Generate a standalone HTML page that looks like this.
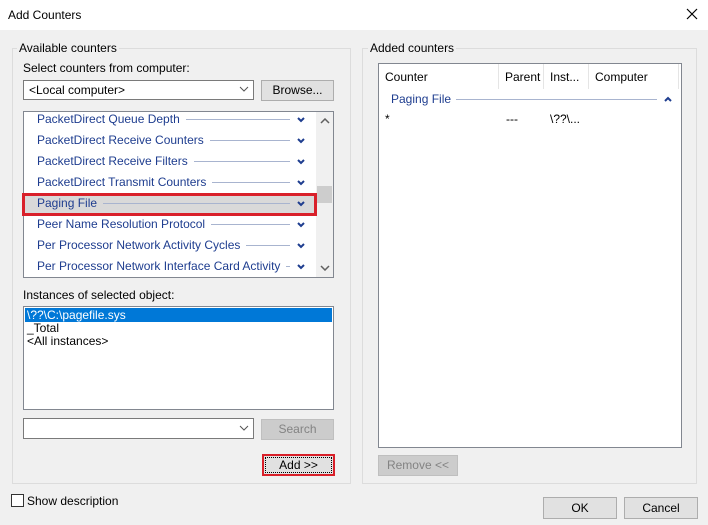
<!DOCTYPE html>
<html><head><style>
*{margin:0;padding:0;box-sizing:border-box}
body{width:708px;height:525px;background:#f0f0f0;font-family:"Liberation Sans",sans-serif;font-size:12px;color:#000;position:relative;overflow:hidden}
.a{position:absolute}
.t{position:absolute;white-space:nowrap;line-height:14px}
.grp{position:absolute;border:1px solid #dcdcdc}
.btn{position:absolute;background:#e1e1e1;border:1px solid #adadad;text-align:center;line-height:18px}
.box{position:absolute;background:#fff;border:1px solid #828790}
.row{position:absolute;left:37px;width:253px;height:21px;line-height:21px;color:#1e3d8f;white-space:nowrap;font-size:12px;display:flex;align-items:center}
.row i{flex:1;height:1px;background:#a8b4cf;margin-left:6px}
.line{position:absolute;height:1px;background:#a8b4cf}
</style></head><body>
<div class="a" style="left:0;top:0;width:708px;height:30px;background:#fff"></div>
<div class="t" style="left:8px;top:8px;font-size:12px">Add Counters</div>
<svg class="a" style="left:686px;top:8px" width="12" height="12"><path d="M1 1L11 11M11 1L1 11" stroke="#000" stroke-width="1.2"/></svg>

<div class="grp" style="left:12px;top:48px;width:339px;height:436px"></div>
<div class="t" style="left:17px;top:41px;background:#f0f0f0;padding:0 2px">Available counters</div>
<div class="t" style="left:23px;top:61px">Select counters from computer:</div>
<div class="box" style="left:23px;top:80px;width:231px;height:20px;border-color:#7a7a7a"></div>
<div class="t" style="left:29px;top:83px">&lt;Local computer&gt;</div>
<svg class="a" style="left:239px;top:86px" width="10" height="6"><path d="M1 1L5 5L9 1" stroke="#555" fill="none"/></svg>
<div class="btn" style="left:261px;top:80px;width:73px;height:21px">Browse...</div>

<div class="box" style="left:23px;top:111px;width:311px;height:167px;overflow:hidden">
 <div class="a" style="left:292px;top:0;width:17px;height:165px;background:#f0f0f0"></div>
 <div class="a" style="left:293px;top:74px;width:15px;height:17px;background:#cdcdcd"></div>
 <svg class="a" style="left:296px;top:6px" width="10" height="6"><path d="M1 5L5 1L9 5" stroke="#606060" stroke-width="1.5" fill="none"/></svg>
 <svg class="a" style="left:296px;top:153px" width="10" height="6"><path d="M1 1L5 5L9 1" stroke="#606060" stroke-width="1.5" fill="none"/></svg>
 <div class="a" style="left:0;top:82px;width:292px;height:21px;background:#d9d9d9"></div>
</div>
<div id="rows"></div>
<div class="a" style="left:22px;top:193px;width:295px;height:23px;border:3px solid #d9202a"></div>

<div class="t" style="left:23px;top:288px">Instances of selected object:</div>
<div class="box" style="left:23px;top:306px;width:311px;height:104px"></div>
<div class="a" style="left:25px;top:308px;width:307px;height:14px;background:#0078d7"></div>
<div class="t" style="left:27px;top:308px;color:#fff">\??\C:\pagefile.sys</div>
<div class="t" style="left:27px;top:321px">_Total</div>
<div class="t" style="left:27px;top:334px">&lt;All instances&gt;</div>

<div class="box" style="left:23px;top:418px;width:231px;height:21px;border-color:#7a7a7a"></div>
<svg class="a" style="left:239px;top:425px" width="10" height="6"><path d="M1 1L5 5L9 1" stroke="#555" fill="none"/></svg>
<div class="btn" style="left:261px;top:419px;width:73px;height:21px;background:#cccccc;border-color:#bfbfbf;color:#838383">Search</div>
<div class="btn" style="left:262px;top:454px;width:73px;height:22px;border:2px solid #d9202a;line-height:18px"><div style="border:1px dotted #000;margin:1px;line-height:14px">Add &gt;&gt;</div></div>

<div class="grp" style="left:362px;top:48px;width:335px;height:436px"></div>
<div class="t" style="left:368px;top:41px;background:#f0f0f0;padding:0 2px">Added counters</div>
<div class="box" style="left:378px;top:63px;width:304px;height:385px"></div>
<div class="t" style="left:385px;top:70px">Counter</div>
<div class="a" style="left:498px;top:64px;width:1px;height:25px;background:#e5e5e5"></div>
<div class="t" style="left:505px;top:70px">Parent</div>
<div class="a" style="left:543px;top:64px;width:1px;height:25px;background:#e5e5e5"></div>
<div class="t" style="left:550px;top:70px">Inst...</div>
<div class="a" style="left:588px;top:64px;width:1px;height:25px;background:#e5e5e5"></div>
<div class="t" style="left:595px;top:70px">Computer</div>
<div class="a" style="left:678px;top:64px;width:1px;height:25px;background:#e5e5e5"></div>
<div class="t" style="left:391px;top:92px;color:#1e3d8f">Paging File</div>
<div class="line" style="left:456px;top:99px;width:201px"></div>
<svg class="a" style="left:664px;top:96px" width="8" height="6"><path d="M1 5L4 2L7 5" stroke="#1e3d8f" stroke-width="2" fill="none"/></svg>
<div class="t" style="left:385px;top:112px">*</div>
<div class="t" style="left:506px;top:112px">---</div>
<div class="t" style="left:550px;top:112px">\??\...</div>
<div class="btn" style="left:378px;top:455px;width:80px;height:21px;background:#cccccc;border-color:#bfbfbf;color:#838383">Remove &lt;&lt;</div>

<div class="a" style="left:11px;top:494px;width:13px;height:13px;border:1px solid #333;background:#fff"></div>
<div class="t" style="left:27px;top:494px">Show description</div>
<div class="btn" style="left:543px;top:497px;width:74px;height:22px;line-height:20px">OK</div>
<div class="btn" style="left:624px;top:497px;width:74px;height:22px;line-height:20px">Cancel</div>

<script>
var n=["PacketDirect Queue Depth","PacketDirect Receive Counters","PacketDirect Receive Filters","PacketDirect Transmit Counters","Paging File","Peer Name Resolution Protocol","Per Processor Network Activity Cycles","Per Processor Network Interface Card Activity"];
var h="";
for(var i=0;i<n.length;i++){var y=109+i*21;
h+='<div class="row" style="top:'+y+'px"><span>'+n[i]+'</span><i></i></div>';
h+='<svg class="a" style="left:297px;top:'+(y+8)+'px" width="8" height="6"><path d="M1 1L4 4L7 1" stroke="#1e3d8f" stroke-width="2" fill="none"/></svg>';}
document.getElementById("rows").innerHTML=h;
</script>
</body></html>
